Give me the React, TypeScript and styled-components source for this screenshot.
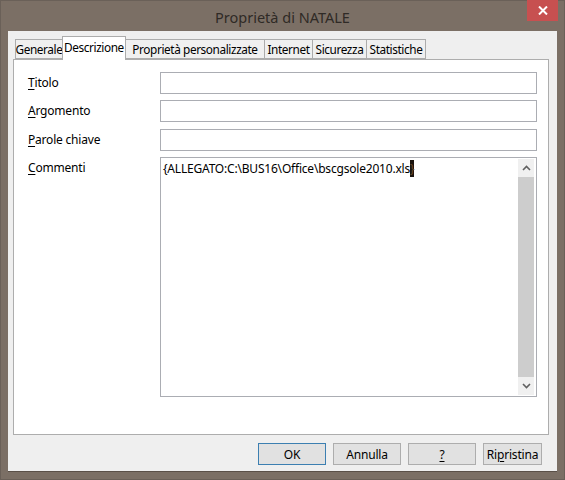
import React from "react";
import styled, { createGlobalStyle } from "styled-components";

const Global = createGlobalStyle`
  html, body { margin: 0; padding: 0; background: #7b6f65; }
  body { font-family: "Segoe UI", "Noto Sans", "Liberation Sans", sans-serif; }
`;

const Window = styled.div`
  width: 565px;
  height: 480px;
  background: #7b6f65;
  display: flex;
  flex-direction: column;
  box-sizing: border-box;
  border: 1px solid #6a6058;
`;

const TitleBar = styled.div`
  position: relative;
  height: 30px;
  display: flex;
  align-items: center;
  justify-content: center;
  color: #2f2a26;
  font-family: "Noto Sans", sans-serif;
  font-size: 14.5px;
  padding-top: 1px;
  box-sizing: border-box;
`;

const CloseButton = styled.div`
  position: absolute;
  top: -1px;
  right: 6px;
  width: 31px;
  height: 21px;
  background: #c75050;
  display: flex;
  align-items: center;
  justify-content: center;
`;

const Client = styled.div`
  flex: 1;
  margin: 0 7px 7px 7px;
  background: #efefef;
  display: flex;
  flex-direction: column;
  border-bottom: 1px solid #5a5048;
`;

const TabStrip = styled.div`
  display: flex;
  align-items: flex-end;
  height: 28px;
  padding-left: 7px;
`;

const Tab = styled.div<{ $active?: boolean; $w: number }>`
  width: ${(p) => p.$w}px;
  height: ${(p) => (p.$active ? 24 : 20)}px;
  box-sizing: border-box;
  border: 1px solid #acacac;
  border-bottom: ${(p) => (p.$active ? "none" : "1px solid #acacac")};
  margin-left: -1px;
  margin-bottom: ${(p) => (p.$active ? -1 : 0)}px;
  background: ${(p) => (p.$active ? "#ffffff" : "#f0f0f0")};
  position: relative;
  z-index: ${(p) => (p.$active ? 2 : 1)};
  font-family: "Noto Sans", sans-serif;
  font-size: 11.8px;
  letter-spacing: -0.4px;
  color: #000;
  display: flex;
  align-items: ${(p) => (p.$active ? "flex-start" : "center")};
  padding-top: ${(p) => (p.$active ? 2 : 0)}px;
  justify-content: center;
  white-space: nowrap;
  &:first-child { margin-left: 0; }
`;

const Panel = styled.div`
  margin: 0 8px 0 5px;
  height: 376px;
  box-sizing: border-box;
  border: 1px solid #adadad;
  background: #ffffff;
  padding: 12px 11px 0 14px;
  display: flex;
  flex-direction: column;
  gap: 6px;
`;

const Row = styled.div<{ $extra?: number }>`
  display: flex;
  align-items: flex-start;
  margin-top: ${(p) => p.$extra || 0}px;
`;

const Label = styled.div`
  width: 132px;
  height: 22px;
  line-height: 21px;
  font-family: "Noto Sans", sans-serif;
  font-size: 12px;
  letter-spacing: -0.2px;
  color: #000;
`;

const U = styled.span`
  text-decoration: underline;
  text-underline-offset: 2px;
`;

const Input = styled.div`
  flex: 1;
  height: 22px;
  box-sizing: border-box;
  border: 1px solid #abadb3;
  background: #fff;
`;

const TextArea = styled.div`
  flex: 1;
  height: 240px;
  box-sizing: border-box;
  border: 1px solid #abadb3;
  background: #fff;
  display: flex;
  padding: 1px 1px 1px 2px;
`;

const AreaText = styled.div`
  flex: 1;
  font-family: "Noto Sans", sans-serif;
  font-size: 12px;
  letter-spacing: -0.2px;
  color: #000;
  line-height: 18px;
  padding-top: 1px;
`;

const Sel = styled.span`
  background: #1a140e;
  color: #6b4a2a;
`;

const Scrollbar = styled.div`
  width: 16px;
  display: flex;
  flex-direction: column;
  background: #f0f0f0;
  margin-right: 1px;
`;

const Arrow = styled.div`
  height: 18px;
  display: flex;
  align-items: center;
  justify-content: center;
  background: #f0f0f0;
`;

const Thumb = styled.div`
  flex: 1;
  background: #cdcdcd;
`;

const ButtonRow = styled.div`
  display: flex;
  justify-content: flex-end;
  gap: 7px;
  padding-right: 15px;
  margin-top: 8px;
`;

const Button = styled.div<{ $w: number; $default?: boolean }>`
  width: ${(p) => p.$w}px;
  height: 22px;
  box-sizing: border-box;
  border: 1px solid ${(p) => (p.$default ? "#3c7fb1" : "#adadad")};
  background: #e1e1e1;
  display: flex;
  align-items: center;
  justify-content: center;
  font-family: "Noto Sans", sans-serif;
  font-size: 12px;
  letter-spacing: -0.2px;
  color: #000;
`;

export default function App() {
  return (
    <>
      <Global />
      <Window>
        <TitleBar>
          Proprietà di NATALE
          <CloseButton>
            <svg width="10" height="9" viewBox="0 0 10 9">
              <path d="M1 0.5 L9 8.5 M9 0.5 L1 8.5" stroke="#fff" strokeWidth="2" />
            </svg>
          </CloseButton>
        </TitleBar>
        <Client>
          <TabStrip>
            <Tab $w={48}>Generale</Tab>
            <Tab $w={64} $active>
              Descrizione
            </Tab>
            <Tab $w={140}>Proprietà personalizzate</Tab>
            <Tab $w={49}>Internet</Tab>
            <Tab $w={55}>Sicurezza</Tab>
            <Tab $w={60}>Statistiche</Tab>
          </TabStrip>
          <Panel>
            <Row>
              <Label>
                <U>T</U>itolo
              </Label>
              <Input />
            </Row>
            <Row>
              <Label>
                <U>A</U>rgomento
              </Label>
              <Input />
            </Row>
            <Row $extra={1}>
              <Label>
                <U>P</U>arole chiave
              </Label>
              <Input />
            </Row>
            <Row>
              <Label>
                <U>C</U>ommenti
              </Label>
              <TextArea>
                <AreaText>
                  {"{ALLEGATO:C:\\BUS16\\Office\\bscgsole2010.xls"}
                  <Sel>{"}"}</Sel>
                </AreaText>
                <Scrollbar>
                  <Arrow>
                    <svg width="9" height="6" viewBox="0 0 9 6">
                      <path d="M1 5 L4.5 1.5 L8 5" stroke="#606060" strokeWidth="1.6" fill="none" />
                    </svg>
                  </Arrow>
                  <Thumb />
                  <Arrow>
                    <svg width="9" height="6" viewBox="0 0 9 6">
                      <path d="M1 1 L4.5 4.5 L8 1" stroke="#606060" strokeWidth="1.6" fill="none" />
                    </svg>
                  </Arrow>
                </Scrollbar>
              </TextArea>
            </Row>
          </Panel>
          <ButtonRow>
            <Button $w={68} $default>
              OK
            </Button>
            <Button $w={68}>Annulla</Button>
            <Button $w={68}>
              <U>?</U>
            </Button>
            <Button $w={59}>
              Ri<U>p</U>ristina
            </Button>
          </ButtonRow>
        </Client>
      </Window>
    </>
  );
}
